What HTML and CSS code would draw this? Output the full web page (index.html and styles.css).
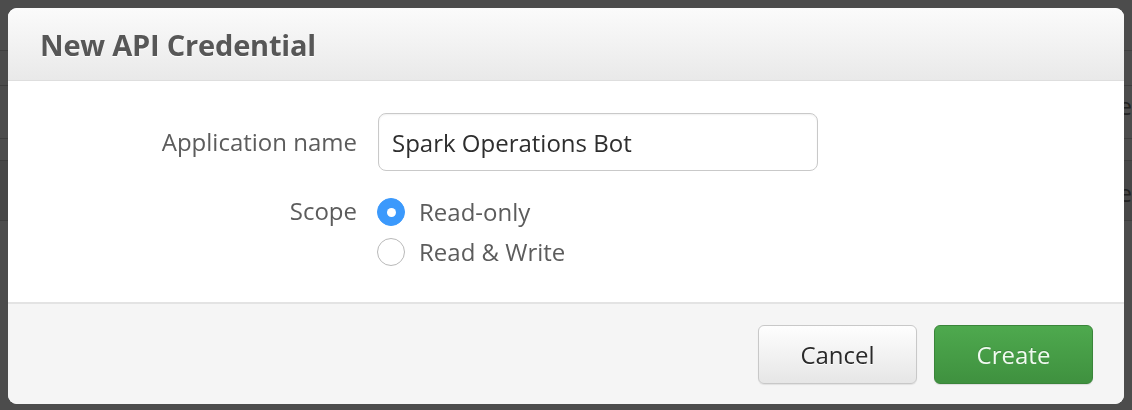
FILE: index.html
```html
<!DOCTYPE html>
<html>
<head>
<meta charset="utf-8">
<link rel="stylesheet" href="styles.css">
</head>
<body>
<div class="page">
  <div class="row r1"></div>
  <div class="row r2"><span class="cell">Name</span></div>
  <div class="row r3"></div>
  <div class="row r4"><span class="cell">Name</span></div>
  <div class="row r5"></div>
</div>
<div class="modal">
  <div class="modal-header">
    <h3 class="modal-title">New API Credential</h3>
  </div>
  <div class="modal-body">
    <div class="form-row">
      <label class="form-label">Application name</label>
      <div class="text-input">Spark Operations Bot</div>
    </div>
    <div class="form-row scope-row">
      <span class="form-label">Scope</span>
      <div class="radios">
        <div class="radio"><span class="radio-dot checked"></span><span class="radio-label">Read-only</span></div>
        <div class="radio"><span class="radio-dot"></span><span class="radio-label">Read &amp; Write</span></div>
      </div>
    </div>
  </div>
  <div class="modal-footer">
    <button class="btn btn-default">Cancel</button>
    <button class="btn btn-primary">Create</button>
  </div>
</div>
</body>
</html>
```

FILE: styles.css
```css
* { box-sizing: border-box; }
html, body { margin: 0; padding: 0; }
body {
  width: 1132px;
  height: 410px;
  overflow: hidden;
  background: #4c4c4c;
  font-family: "Open Sans", "DejaVu Sans", sans-serif;
}
.page {
  display: flex;
  flex-direction: column;
  padding-top: 50px;
}
.row {
  border-top: 1px solid #3e3e3e;
  position: relative;
}
.r1 { height: 35px; border-top-color: #404040; }
.r2 { height: 53px; }
.r3 { height: 22px; }
.r4 { height: 60px; background: #474747; }
.r5 { height: 27px; }
.cell {
  display: block;
  text-align: right;
  margin-left: 1040px;
  font-size: 24px;
  color: #222;
  line-height: 36px;
}
.r2 .cell { margin-top: 2px; }
.r4 .cell { margin-top: 14px; }

.modal {
  position: fixed;
  top: 8px;
  left: 8px;
  width: 1116px;
  height: 396px;
  background: #fff;
  border-radius: 9px;
  display: flex;
  flex-direction: column;
  overflow: hidden;
}
.modal-header {
  height: 73px;
  background: linear-gradient(#fbfbfb, #e9e9e9);
  border-bottom: 1px solid #dedede;
  display: flex;
  align-items: center;
  padding-left: 32px;
}
.modal-title {
  margin: 0;
  font-size: 29px;
  font-weight: 700;
  color: #575757;
  text-shadow: 0 1px 0 #fff;
  letter-spacing: -0.2px;
}
.modal-body {
  flex: 1;
  padding-top: 32px;
  display: flex;
  flex-direction: column;
  gap: 21px;
}
.form-row {
  display: grid;
  grid-template-columns: 349px 440px;
  column-gap: 21px;
  align-items: center;
}
.form-label {
  text-align: right;
  font-size: 24px;
  color: #5c5c5c;
  margin-top: -1px;
}
.text-input {
  height: 58px;
  border: 1px solid #c9c9c9;
  border-radius: 8px;
  padding-left: 13px;
  font-size: 24px;
  color: #2e2e2e;
  display: flex;
  align-items: center;
  box-shadow: inset 0 1px 2px rgba(0,0,0,0.06);
}
.scope-row { align-items: start; }
.scope-row .form-label { line-height: 40px; }
.radios { display: flex; flex-direction: column; margin-left: -1px; }
.radio {
  height: 40px;
  display: flex;
  align-items: center;
  gap: 14px;
}
.radio-dot {
  width: 28px;
  height: 28px;
  border-radius: 50%;
  border: 1px solid #b9b9b9;
  background: #fff;
  display: flex;
  align-items: center;
  justify-content: center;
}
.radio-dot.checked {
  background: #3b99fc;
  border-color: #3b99fc;
}
.radio-dot.checked::after {
  content: "";
  width: 9px;
  height: 9px;
  border-radius: 50%;
  background: #fff;
}
.radio-label {
  font-size: 24px;
  color: #5c5c5c;
  margin-top: -1px;
}
.modal-footer {
  height: 102px;
  background: #f5f5f5;
  border-top: 2px solid #e3e3e3;
  display: flex;
  justify-content: flex-end;
  align-items: center;
  gap: 17px;
  padding-right: 31px;
}
.btn {
  width: 159px;
  height: 59px;
  border-radius: 6px;
  font-family: "Open Sans", "DejaVu Sans", sans-serif;
  font-size: 24px;
  padding: 0;
  margin: 0;
}
.btn-default {
  background: linear-gradient(#fefefe, #e6e6e6);
  border: 1px solid #c8c8c8;
  color: #2a2a2a;
  text-shadow: 0 1px 0 #fff;
  box-shadow: 0 1px 1px rgba(0,0,0,0.08);
}
.btn-primary {
  background: linear-gradient(#4ea94e, #3f913f);
  border: 1px solid #3a853a;
  color: #f0faf0;
  text-shadow: 0 -1px 0 rgba(0,0,0,0.15);
  box-shadow: 0 1px 1px rgba(0,0,0,0.1);
}
```
